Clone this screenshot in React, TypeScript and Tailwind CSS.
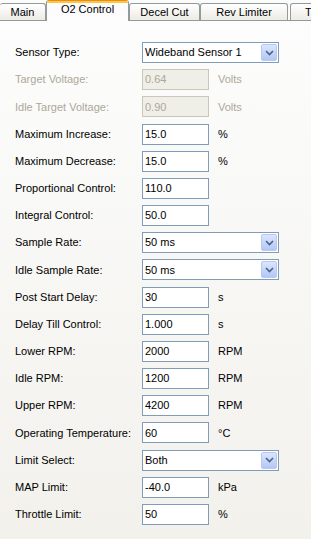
import React from "react";

type Row =
  | { kind: "select"; label: string; value: string }
  | { kind: "input"; label: string; value: string; unit?: string; disabled?: boolean };

const rows: Row[] = [
  { kind: "select", label: "Sensor Type:", value: "Wideband Sensor 1" },
  { kind: "input", label: "Target Voltage:", value: "0.64", unit: "Volts", disabled: true },
  { kind: "input", label: "Idle Target Voltage:", value: "0.90", unit: "Volts", disabled: true },
  { kind: "input", label: "Maximum Increase:", value: "15.0", unit: "%" },
  { kind: "input", label: "Maximum Decrease:", value: "15.0", unit: "%" },
  { kind: "input", label: "Proportional Control:", value: "110.0" },
  { kind: "input", label: "Integral Control:", value: "50.0" },
  { kind: "select", label: "Sample Rate:", value: "50 ms" },
  { kind: "select", label: "Idle Sample Rate:", value: "50 ms" },
  { kind: "input", label: "Post Start Delay:", value: "30", unit: "s" },
  { kind: "input", label: "Delay Till Control:", value: "1.000", unit: "s" },
  { kind: "input", label: "Lower RPM:", value: "2000", unit: "RPM" },
  { kind: "input", label: "Idle RPM:", value: "1200", unit: "RPM" },
  { kind: "input", label: "Upper RPM:", value: "4200", unit: "RPM" },
  { kind: "input", label: "Operating Temperature:", value: "60", unit: "°C" },
  { kind: "select", label: "Limit Select:", value: "Both" },
  { kind: "input", label: "MAP Limit:", value: "-40.0", unit: "kPa" },
  { kind: "input", label: "Throttle Limit:", value: "50", unit: "%" },
];

function DropButton() {
  return (
    <div className="absolute right-[1px] top-[1px] bottom-[1px] w-[16px] rounded-[2px] border border-[#b7c9f2] bg-gradient-to-b from-[#dbe6fd] to-[#b3c7f5] flex items-center justify-center">
      <svg width="9" height="6" viewBox="0 0 9 6">
        <path d="M1 1 L4.5 4.5 L8 1" fill="none" stroke="#4d6185" strokeWidth="1.6" />
      </svg>
    </div>
  );
}

function Tab({
  label,
  left,
  width,
  selected,
  startPad,
}: {
  label: string;
  left?: boolean;
  width: number;
  selected?: boolean;
  startPad?: boolean;
}) {
  if (selected) {
    return (
      <div
        className="relative z-10 h-[21px] self-start shrink-0 flex flex-col border-x border-[#919b9c] bg-[#fcfcfe] rounded-t-[3px] overflow-hidden"
        style={{ width }}
      >
        <div className="h-[1px] bg-[#e68b2c]" />
        <div className="h-[2px] bg-[#ffc83c]" />
        <div className="flex-1 flex items-start justify-center leading-[13px]">{label}</div>
      </div>
    );
  }
  return (
    <div
      className={`h-[17px] self-end shrink-0 mb-[1px] flex items-center border-t border-x border-[#919b9c] rounded-t-[3px] bg-gradient-to-b from-[#ffffff] to-[#ecebe5] ${
        left ? "border-l-0" : ""
      } ${startPad ? "justify-start pl-[14px]" : "justify-center"}`}
      style={{ width }}
    >
      {label}
    </div>
  );
}

export default function App() {
  return (
    <div
      className="w-[311px] h-[539px] overflow-hidden text-[11px] text-black bg-gradient-to-b from-[#fdfdfd] to-[#f2f1ec]"
      style={{ fontFamily: '"Liberation Sans", Arial, sans-serif' }}
    >
      <div className="relative h-[21px] flex items-end bg-[#fbfbf9] overflow-hidden">
        <div className="absolute left-0 right-0 bottom-0 h-[1px] bg-[#919b9c]" />
        <Tab label="Main" left width={46} />
        <Tab label="O2 Control" selected width={83} />
        <Tab label="Decel Cut" width={71} />
        <Tab label="Rev Limiter" width={88} />
        <div className="w-[2px] shrink-0" />
        <Tab label="T" width={40} startPad />
      </div>
      <div className="pt-[21px] pl-[15px] flex flex-col gap-[6.18px]">
        {rows.map((r, i) => (
          <div key={i} className="flex items-center h-[21px]">
            <div className={`w-[127px] ${r.kind === "input" && r.disabled ? "text-[#aca899]" : ""}`}>{r.label}</div>
            {r.kind === "select" ? (
              <div className="relative w-[137px] h-[21px] border border-[#7f9db9] bg-white pl-[2px] flex items-center">
                {r.value}
                <DropButton />
              </div>
            ) : (
              <>
                <div
                  className={`w-[67px] h-[21px] border pl-[2px] flex items-center ${
                    r.disabled ? "border-[#c9c7ba] bg-[#f0efe7] text-[#aca899]" : "border-[#7f9db9] bg-white"
                  }`}
                >
                  {r.value}
                </div>
                {r.unit && <div className={`ml-[9px] ${r.disabled ? "text-[#aca899]" : ""}`}>{r.unit}</div>}
              </>
            )}
          </div>
        ))}
      </div>
    </div>
  );
}
